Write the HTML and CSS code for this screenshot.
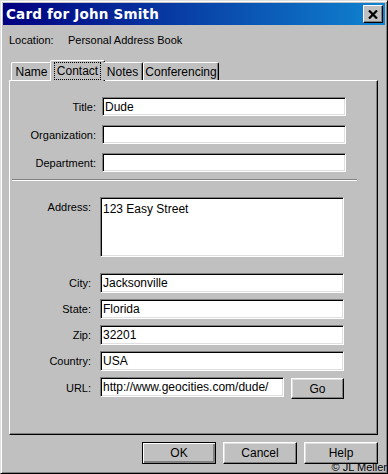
FILE: index.html
```html
<!DOCTYPE html>
<html lang="en">

<head>
  <meta charset="UTF-8">
  <title>Card for John Smith</title>
  <link rel="stylesheet" href="styles.css">
</head>

<body>
  <div class="window">
    <div class="titlebar">
      <span class="title">Card for John Smith</span>
      <div class="close">
        <svg width="10" height="9" viewBox="0 0 10 9">
          <path d="M1 0.5 L9 8.5 M9 0.5 L1 8.5" stroke="#000" stroke-width="2.2" fill="none" />
        </svg>
      </div>
    </div>

    <div class="location">
      <span class="loc-label">Location:</span>
      <span>Personal Address Book</span>
    </div>

    <div class="tabs">
      <div class="tab tab-name">Name</div>
      <div class="tab tab-contact active"><span class="focus">Contact</span></div>
      <div class="tab tab-notes">Notes</div>
      <div class="tab tab-conf">Conferencing</div>
    </div>

    <div class="panel">
      <div class="form form-top">
        <label>Title:</label>
        <input type="text" value="Dude">
        <label>Organization:</label>
        <input type="text" value="">
        <label>Department:</label>
        <input type="text" value="">
      </div>

      <div class="separator"></div>

      <div class="form form-bottom">
        <label class="top">Address:</label>
        <textarea class="address">123 Easy Street</textarea>
        <label>City:</label>
        <input type="text" value="Jacksonville">
        <label>State:</label>
        <input type="text" value="Florida">
        <label>Zip:</label>
        <input type="text" value="32201">
        <label>Country:</label>
        <input type="text" value="USA">
        <label>URL:</label>
        <div class="url-row">
          <input type="text" class="url" value="http://www.geocities.com/dude/">
          <button class="btn go">Go</button>
        </div>
      </div>
    </div>

    <div class="actions">
      <button class="btn default">OK</button>
      <button class="btn">Cancel</button>
      <button class="btn">Help</button>
    </div>

    <div class="credit">&copy; JL Meller</div>
  </div>
</body>

</html>
```

FILE: styles.css
```css
* {
  box-sizing: border-box;
  margin: 0;
  padding: 0;
}
body {
  background: #c0c0c0;
  font-family: "Liberation Sans", Arial, sans-serif;
  font-size: 11px;
  color: #000;
  overflow: hidden;
}
.window {
  position: relative;
  width: 388px;
  height: 474px;
  padding: 2px;
  background: #c0c0c0;
  border: 1px solid;
  border-color: #dfdfdf #000 #000 #dfdfdf;
  box-shadow: inset 1px 1px #fff, inset -1px -1px #808080;
  overflow: hidden;
}

/* title bar */
.titlebar {
  display: flex;
  align-items: center;
  justify-content: space-between;
  height: 22px;
  padding-left: 3px;
  background: linear-gradient(to right, #000080, #1084d0);
}
.title {
  color: #fff;
  font-family: "DejaVu Sans", sans-serif;
  font-weight: bold;
  font-size: 13.5px;
  letter-spacing: 0.2px;
}
.close {
  display: flex;
  align-items: center;
  justify-content: center;
  width: 20px;
  height: 18px;
  margin-right: 2px;
  background: #c0c0c0;
  border: 1px solid;
  border-color: #fff #000 #000 #fff;
  box-shadow: inset -1px -1px #808080;
}

/* location */
.location {
  display: flex;
  height: 35px;
  padding: 9px 0 0 6px;
  line-height: 13px;
}
.loc-label {
  width: 59px;
}

/* tabs */
.tabs {
  display: flex;
  align-items: flex-end;
  height: 20px;
  padding-left: 8px;
  position: relative;
  z-index: 1;
}
.tab {
  display: flex;
  align-items: center;
  justify-content: center;
  height: 18px;
  padding-top: 1px;
  font-size: 12px;
  border-top: 1px solid #fff;
  border-left: 1px solid #fff;
  border-right: 1px solid #000;
  border-radius: 2px 2px 0 0;
  box-shadow: inset -1px 0 #808080;
  background: #c0c0c0;
}
.tab-name { width: 41px; }
.tab-contact { width: 51px; }
.tab-notes { width: 40px; }
.tab-conf { width: 76px; }
.tab.active {
  height: 21px;
  margin: 0 -2px -1px;
  width: 55px;
  padding-bottom: 2px;
}
.tab.active + .tab {
  border-left: none;
}
.focus {
  padding: 1px 2px;
  border: 1px dotted #000;
}

/* panel */
.panel {
  height: 355px;
  margin: 0 7px 0 6px;
  border: 1px solid;
  border-color: #fff #000 #000 #fff;
  box-shadow: inset -1px -1px #808080;
}
.form {
  display: grid;
  align-items: center;
}
.form-top {
  grid-template-columns: 86px 244px;
  column-gap: 6px;
  row-gap: 9px;
  padding-top: 16px;
}
.form-bottom {
  grid-template-columns: 81px 244px;
  column-gap: 9px;
  row-gap: 6px;
  padding-top: 16px;
}
label {
  text-align: right;
  font-size: 11px;
}
label.top {
  align-self: start;
  padding-top: 4px;
}
input,
textarea {
  height: 20px;
  padding: 0 2px;
  font-family: "Liberation Sans", Arial, sans-serif;
  font-size: 12px;
  color: #000;
  background: #fff;
  border: 1px solid;
  border-color: #808080 #fff #fff #808080;
  box-shadow: inset 1px 1px #000, inset -1px -1px #dfdfdf;
  outline: none;
}
.form-top input {
  height: 19px;
}
textarea.address {
  height: 60px;
  padding: 4px 2px;
  resize: none;
  margin-bottom: 10px;
  overflow: hidden;
}
.separator {
  width: 345px;
  height: 2px;
  margin: 7px 0 0 2px;
  border-top: 1px solid #808080;
  border-bottom: 1px solid #fff;
}
.url-row {
  display: flex;
  gap: 7px;
}
.url {
  width: 184px;
}

/* buttons */
.btn {
  width: 74px;
  height: 22px;
  font-family: "Liberation Sans", Arial, sans-serif;
  font-size: 12px;
  color: #000;
  background: #c0c0c0;
  border: 1px solid;
  border-color: #fff #000 #000 #fff;
  box-shadow: inset -1px -1px #808080, inset 1px 1px #dfdfdf;
}
.btn.go {
  width: 53px;
  height: 21px;
  margin-top: 1px;
}
.btn.default {
  border: 1px solid #000;
  box-shadow: inset 1px 1px #fff, inset -2px -2px #808080;
}
.actions {
  display: flex;
  justify-content: flex-end;
  gap: 7px;
  margin: 7px 7px 0 0;
}
.credit {
  position: absolute;
  right: 0;
  bottom: 0;
  font-size: 11px;
  line-height: 11px;
}
```
